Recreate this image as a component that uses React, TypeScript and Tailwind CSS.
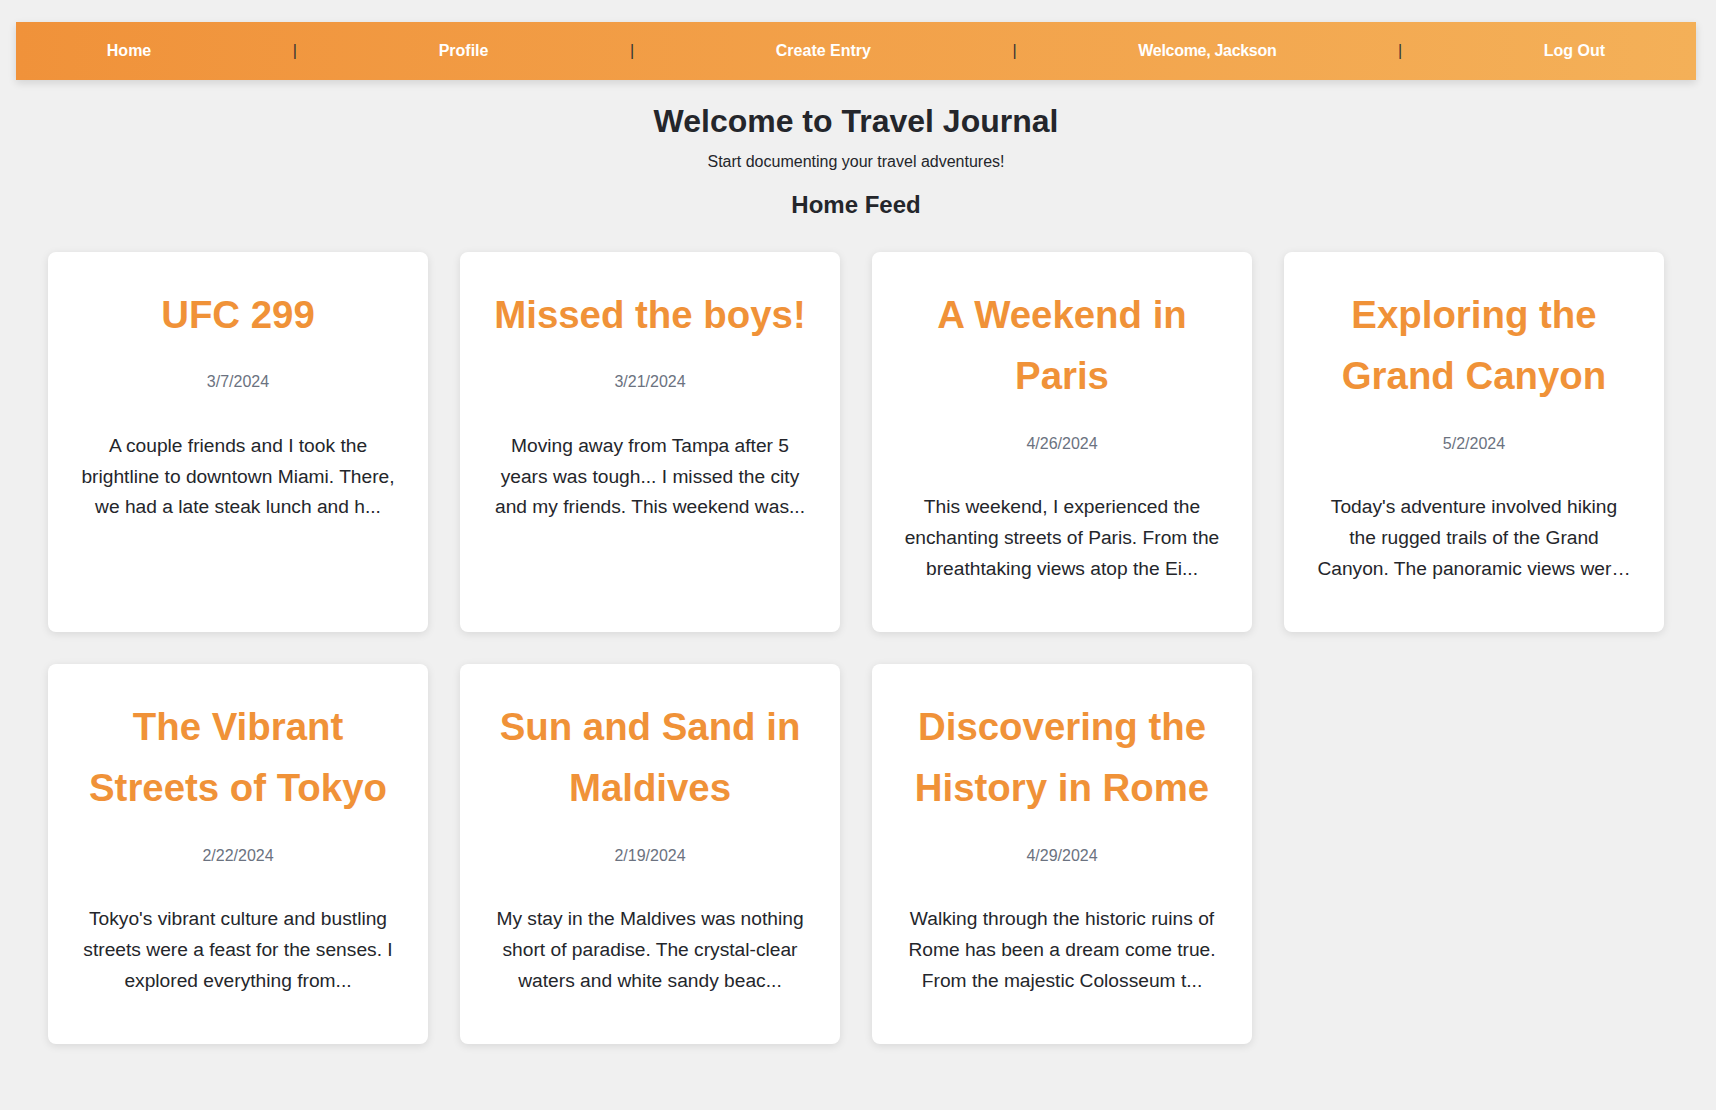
const entries = [
  {
    title: "UFC 299",
    date: "3/7/2024",
    body: "A couple friends and I took the\nbrightline to downtown Miami. There,\nwe had a late steak lunch and h...",
  },
  {
    title: "Missed the boys!",
    date: "3/21/2024",
    body: "Moving away from Tampa after 5\nyears was tough... I missed the city\nand my friends. This weekend was...",
  },
  {
    title: "A Weekend in Paris",
    date: "4/26/2024",
    body: "This weekend, I experienced the\nenchanting streets of Paris. From the\nbreathtaking views atop the Ei...",
  },
  {
    title: "Exploring the Grand Canyon",
    date: "5/2/2024",
    body: "Today's adventure involved hiking\nthe rugged trails of the Grand\nCanyon. The panoramic views wer…",
  },
  {
    title: "The Vibrant Streets of Tokyo",
    date: "2/22/2024",
    body: "Tokyo's vibrant culture and bustling\nstreets were a feast for the senses. I\nexplored everything from...",
  },
  {
    title: "Sun and Sand in Maldives",
    date: "2/19/2024",
    body: "My stay in the Maldives was nothing\nshort of paradise. The crystal-clear\nwaters and white sandy beac...",
  },
  {
    title: "Discovering the History in Rome",
    date: "4/29/2024",
    body: "Walking through the historic ruins of\nRome has been a dream come true.\nFrom the majestic Colosseum t...",
  },
];

const Sep = () => <span className="text-[16px] font-normal text-[#333]">|</span>;

const Navbar = () => (
  <div className="px-4 pt-[22px]">
    <nav className="flex h-[58px] items-center justify-around bg-gradient-to-r from-[#f0923a] to-[#f4b058] px-[10px] text-[16px] font-bold text-white shadow-[0_3px_8px_rgba(0,0,0,0.12)]">
      <a href="/#" className="px-5">Home</a>
      <Sep />
      <a href="/#" className="px-5">Profile</a>
      <Sep />
      <a href="/#" className="px-5">Create Entry</a>
      <Sep />
      <span className="tracking-[-0.3px]">Welcome, Jackson</span>
      <Sep />
      <a href="/#" className="px-5">Log Out</a>
    </nav>
  </div>
);

const EntryCard = ({ title, date, body }: { title: string; date: string; body: string }) => (
  <div className="h-[380px] rounded-lg bg-white px-8 pt-8 text-center shadow-[0_2px_8px_rgba(0,0,0,0.1)]">
    <h3 className="text-[38.4px] font-bold leading-[61.44px] text-[#f09238]">{title}</h3>
    <p className="mt-[24px] text-[16px] leading-[25.6px] text-[#6b7280]">{date}</p>
    <p className="mt-[36px] whitespace-pre-line text-[19.2px] leading-[30.72px] text-[#24262b]">{body}</p>
  </div>
);

export default function App() {
  return (
    <div className="min-h-[1110px] bg-[#f0f0f0] pb-10 font-['Liberation_Sans',Arial,sans-serif] text-[#24262b]">
      <div className="w-[1712px]">
        <Navbar />
        <div className="text-center">
          <h1 className="mt-[21px] text-[32px] font-bold leading-[40px]">Welcome to Travel Journal</h1>
          <p className="mt-[9px] text-[16px] leading-[24px]">Start documenting your travel adventures!</p>
          <h2 className="mt-[15px] text-[24px] font-bold leading-[32px]">Home Feed</h2>
        </div>
        <div className="mt-[31px] grid grid-cols-[repeat(4,380px)] gap-8 px-12">
          {entries.map((e) => (
            <EntryCard key={e.title} {...e} />
          ))}
        </div>
      </div>
    </div>
  );
}
